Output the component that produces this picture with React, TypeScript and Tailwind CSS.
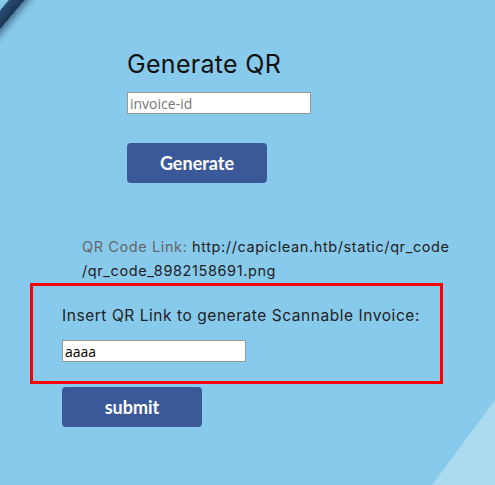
const poppins = { fontFamily: "Inter, 'Noto Sans', sans-serif" };

export default function App() {
  return (
    <div className="relative h-[485px] w-full overflow-hidden bg-[#88caeb]" style={poppins}>
      {/* corner decorations */}
      <div className="absolute -left-[30px] top-[2px] h-[12px] w-[80px] -rotate-[50deg] bg-gradient-to-b from-[#2c4f75] to-[#1b3553] shadow-[0_4px_6px_rgba(20,40,70,0.5)]" />
      <svg className="absolute bottom-0 right-0" width="70" height="90" viewBox="0 0 70 90">
        <polygon points="70,5 70,90 7,90" fill="#acdaef" />
      </svg>

      <div className="pl-[127px] pt-[47px]">
        <h1 className="text-[25px] leading-[34px] tracking-[0.3px] text-[#111]">Generate QR</h1>
        <input
          type="text"
          placeholder="invoice-id"
          className="mt-[11px] block h-[22px] w-[184px] border border-[#999] bg-white px-[2px] text-[14px] text-black placeholder:text-[#777]"
          style={{ fontFamily: "'Open Sans', sans-serif" }}
        />
        <button
          className="mt-[29px] block h-[40px] w-[140px] rounded-[4px] bg-[#3b5998] text-[18px] font-bold text-white"
          style={{ fontFamily: "Lato, sans-serif" }}
        >
          Generate
        </button>
      </div>

      <p className="mt-[52px] w-[400px] pl-[82px] text-[14.5px] leading-[24px] tracking-[0.6px] text-[#222] box-content">
        <span className="text-[#666]">QR Code Link: </span>
        http://capiclean.htb/static/qr_code
        <br />
        /qr_code_8982158691.png
      </p>

      <div className="ml-[30px] mt-0 h-[101px] w-[413px] border-[3px] border-[#ff0000] pl-[29px] pt-[20px]">
        <p className="text-[15.5px] leading-[20px] tracking-[0.55px] text-[#222]">Insert QR Link to generate Scannable Invoice:</p>
        <input
          type="text"
          defaultValue="aaaa"
          className="mt-[14px] block h-[22px] w-[184px] border border-[#999] bg-white px-[2px] text-[14px] text-black"
          style={{ fontFamily: "'Open Sans', sans-serif" }}
        />
      </div>

      <button
        className="ml-[62px] mt-[3px] block h-[40px] w-[140px] rounded-[4px] bg-[#3b5998] text-[18px] font-bold text-white"
        style={{ fontFamily: "Lato, sans-serif" }}
      >
        submit
      </button>
    </div>
  );
}
